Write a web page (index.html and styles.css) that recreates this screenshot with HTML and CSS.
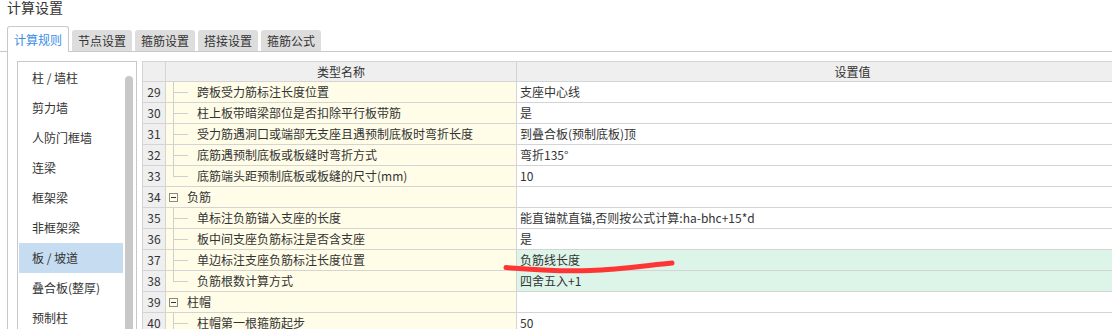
FILE: index.html
```html
<!DOCTYPE html>
<html lang="zh">
<head>
    <meta charset="UTF-8">
    <title>计算设置</title>
    <link rel="stylesheet" href="styles.css">
</head>
<body>
    <div class="title">计算设置</div>

    <div class="tabs">
        <div class="tab active">计算规则</div>
        <div class="tab">节点设置</div>
        <div class="tab">箍筋设置</div>
        <div class="tab">搭接设置</div>
        <div class="tab">箍筋公式</div>
    </div>

    <div class="panel">
        <div class="side">
            <ul class="side-list">
                <li>柱 / 墙柱</li>
                <li>剪力墙</li>
                <li>人防门框墙</li>
                <li>连梁</li>
                <li>框架梁</li>
                <li>非框架梁</li>
                <li class="selected">板 / 坡道</li>
                <li>叠合板(整厚)</li>
                <li>预制柱</li>
            </ul>
            <div class="scroll-thumb"></div>
        </div>

        <div class="grid">
            <div class="row head">
                <div class="num"></div>
                <div class="name">类型名称</div>
                <div class="val">设置值</div>
            </div>
            <div class="row">
                <div class="num">29</div>
                <div class="name"><span class="branch"></span>跨板受力筋标注长度位置</div>
                <div class="val">支座中心线</div>
            </div>
            <div class="row">
                <div class="num">30</div>
                <div class="name"><span class="branch"></span>柱上板带暗梁部位是否扣除平行板带筋</div>
                <div class="val">是</div>
            </div>
            <div class="row">
                <div class="num">31</div>
                <div class="name"><span class="branch"></span>受力筋遇洞口或端部无支座且遇预制底板时弯折长度</div>
                <div class="val">到叠合板(预制底板)顶</div>
            </div>
            <div class="row">
                <div class="num">32</div>
                <div class="name"><span class="branch"></span>底筋遇预制底板或板缝时弯折方式</div>
                <div class="val">弯折135°</div>
            </div>
            <div class="row">
                <div class="num">33</div>
                <div class="name"><span class="branch last"></span>底筋端头距预制底板或板缝的尺寸(mm)</div>
                <div class="val">10</div>
            </div>
            <div class="row">
                <div class="num">34</div>
                <div class="name group"><span class="toggle"></span>负筋</div>
                <div class="val"></div>
            </div>
            <div class="row">
                <div class="num">35</div>
                <div class="name"><span class="branch"></span>单标注负筋锚入支座的长度</div>
                <div class="val">能直锚就直锚,否则按公式计算:ha-bhc+15*d</div>
            </div>
            <div class="row">
                <div class="num">36</div>
                <div class="name"><span class="branch"></span>板中间支座负筋标注是否含支座</div>
                <div class="val">是</div>
            </div>
            <div class="row changed">
                <div class="num">37</div>
                <div class="name"><span class="branch"></span>单边标注支座负筋标注长度位置</div>
                <div class="val">负筋线长度</div>
            </div>
            <div class="row changed">
                <div class="num">38</div>
                <div class="name"><span class="branch last"></span>负筋根数计算方式</div>
                <div class="val">四舍五入+1</div>
            </div>
            <div class="row">
                <div class="num">39</div>
                <div class="name group"><span class="toggle"></span>柱帽</div>
                <div class="val"></div>
            </div>
            <div class="row">
                <div class="num">40</div>
                <div class="name"><span class="branch"></span>柱帽第一根箍筋起步</div>
                <div class="val">50</div>
            </div>
        </div>
    </div>

    <!-- 手画的红色标记线 -->
    <svg class="mark" width="1112" height="329" viewBox="0 0 1112 329">
        <path d="M506 267.5 C530 269.5 560 271.5 590 270.5 C620 269.5 650 265 672 263" fill="none" stroke="#ff3535" stroke-width="5" stroke-linecap="round"/>
    </svg>
</body>
</html>
```

FILE: styles.css
```css
html, body {
    overflow: hidden;
}
body {
    margin: 0;
    width: 1112px;
    height: 329px;
    position: relative;
    font-family: "Noto Sans CJK SC", "Microsoft YaHei", sans-serif;
    font-size: 12px;
    color: #333;
    background-color: #fff;
}
.title {
    padding-left: 7px;
    font-size: 14px;
    line-height: 14px;
    height: 14px;
}

/* 标签页 */
.tabs {
    margin-top: 12px;
    padding-left: 7px;
    display: flex;
    align-items: flex-end;
    gap: 3px;
    border-bottom: 1px solid #c8c8c8;
    height: 25px;
}
.tab {
    height: 21px;
    line-height: 21px;
    padding: 0 6px;
    background-color: #dddddd;
    border-radius: 3px 3px 0 0;
    white-space: nowrap;
}
.tab.active {
    height: 25px;
    line-height: 25px;
    margin-bottom: -1px;
    padding: 0 6px;
    background-color: #fff;
    color: #3a8ee6;
    border: 1px solid #c8c8c8;
    border-bottom: none;
}

.panel {
    margin-left: 7px;
    border-left: 1px solid #c8c8c8;
    padding: 9px 0 0 9px;
    display: flex;
    gap: 5px;
    height: 277px;
    box-sizing: border-box;
    overflow: hidden;
}

/* 左侧列表 */
.side {
    width: 120px;
    flex-shrink: 0;
    height: 300px;
    box-sizing: border-box;
    border: 1px solid #c8c8c8;
    display: flex;
}
.side-list {
    list-style: none;
    margin: 1px 0 0 1px;
    padding: 0;
    width: 104px;
}
.side-list li {
    height: 30px;
    line-height: 30px;
    padding-left: 13px;
    white-space: nowrap;
}
.side-list li.selected {
    background-color: #c5dcf1;
}
.scroll-thumb {
    width: 8px;
    margin: 14px 3px 0 2px;
    background-color: #c8c8c8;
    border-radius: 4px 4px 0 0;
}

/* 表格 */
.grid {
    border-left: 1px solid #d4d4d4;
    border-top: 1px solid #d4d4d4;
    flex-shrink: 0;
    align-self: flex-start;
}
.row {
    display: grid;
    grid-template-columns: 23px 351px 672px;
    height: 21px;
}
.row > div {
    border-right: 1px solid #d4d4d4;
    border-bottom: 1px solid #d4d4d4;
    box-sizing: border-box;
    line-height: 20px;
    white-space: nowrap;
    overflow: hidden;
}
.row.head {
    height: 20px;
    background-color: #efefef;
}
.row.head > div {
    line-height: 19px;
    text-align: center;
}
.num {
    background-color: #efefef;
    text-align: center;
}
.name {
    background-color: #fffde8;
    display: flex;
    align-items: stretch;
    padding-left: 7px;
}
.row.head .name {
    display: block;
    padding-left: 0;
    background-color: #efefef;
}
.val {
    padding-left: 3px;
    background-color: #fff;
}
.row.head .val {
    padding-left: 0;
    background-color: #efefef;
}
.row.changed .val {
    background-color: #ddf5e9;
}

/* 树形连线 */
.branch {
    width: 15px;
    margin-right: 9px;
    flex-shrink: 0;
    background-image: linear-gradient(#cfcfcf, #cfcfcf), linear-gradient(#cfcfcf, #cfcfcf);
    background-repeat: no-repeat;
    background-position: 0 0, 0 10px;
    background-size: 1px 100%, 100% 1px;
}
.branch.last {
    background-size: 1px 11px, 100% 1px;
}
.name.group {
    padding-left: 3px;
    align-items: center;
}
.toggle {
    width: 9px;
    height: 9px;
    box-sizing: border-box;
    border: 1px solid #8a8a8a;
    margin-right: 9px;
    flex-shrink: 0;
    background-image: linear-gradient(#333, #333);
    background-repeat: no-repeat;
    background-position: 1px 3px;
    background-size: 5px 1px;
}

.mark {
    position: absolute;
    left: 0;
    top: 0;
    pointer-events: none;
}
```
